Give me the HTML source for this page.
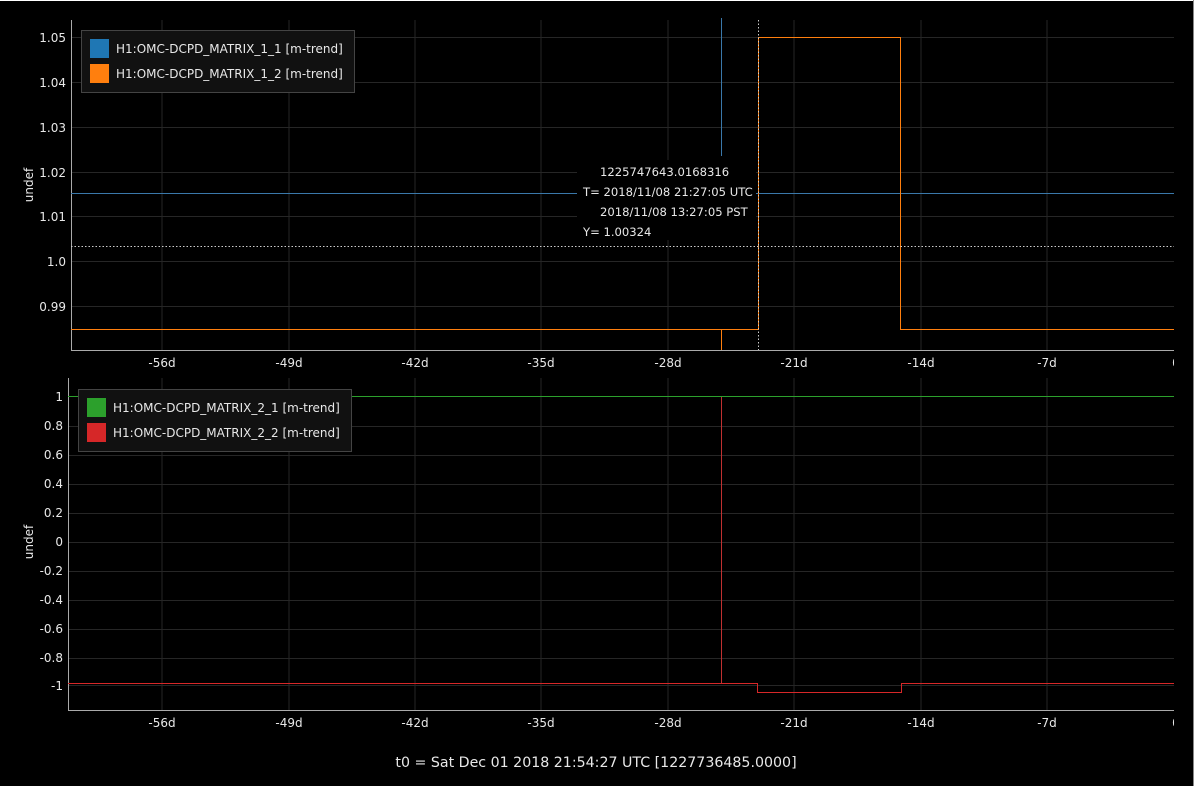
<!DOCTYPE html>
<html><head><style>
html,body{margin:0;padding:0;background:#000;width:1194px;height:786px;overflow:hidden}
svg{display:block}
text{font-family:"DejaVu Sans","Liberation Sans",sans-serif;fill:#e8e8e8}
</style></head><body>
<svg width="1194" height="786" viewBox="0 0 1194 786" xmlns="http://www.w3.org/2000/svg">
<rect width="1194" height="786" fill="#000"/>
<line x1="0" y1="0.5" x2="1194" y2="0.5" stroke="#fff" stroke-width="1"/>
<line x1="1193.5" y1="0" x2="1193.5" y2="786" stroke="#888" stroke-width="1"/>

<g stroke="#262626" stroke-width="1">
<line x1="162" y1="20" x2="162" y2="350"/><line x1="289" y1="20" x2="289" y2="350"/><line x1="415" y1="20" x2="415" y2="350"/><line x1="541" y1="20" x2="541" y2="350"/><line x1="668" y1="20" x2="668" y2="350"/><line x1="794" y1="20" x2="794" y2="350"/><line x1="921" y1="20" x2="921" y2="350"/><line x1="1047" y1="20" x2="1047" y2="350"/>
<line x1="71" y1="37.5" x2="1174" y2="37.5"/><line x1="71" y1="82.5" x2="1174" y2="82.5"/><line x1="71" y1="127.5" x2="1174" y2="127.5"/><line x1="71" y1="172.5" x2="1174" y2="172.5"/><line x1="71" y1="216.5" x2="1174" y2="216.5"/><line x1="71" y1="261.5" x2="1174" y2="261.5"/><line x1="71" y1="306.5" x2="1174" y2="306.5"/>
</g>
<line x1="71.5" y1="20" x2="71.5" y2="350" stroke="#aaa"/>
<line x1="71" y1="350.5" x2="1174" y2="350.5" stroke="#aaa"/>
<line x1="71" y1="193.5" x2="1174" y2="193.5" stroke="#3a78aa"/>
<line x1="721.5" y1="18" x2="721.5" y2="156" stroke="#3a78aa"/>
<polyline points="71,329.5 758.5,329.5 758.5,37.5 900.5,37.5 900.5,329.5 1174,329.5" fill="none" stroke="#ff7f0e" stroke-width="1"/>
<line x1="721.5" y1="329" x2="721.5" y2="350" stroke="#ff7f0e"/>
<line x1="758.5" y1="20" x2="758.5" y2="350" stroke="#ccc" stroke-dasharray="1.5,2"/>
<line x1="71" y1="246.5" x2="1174" y2="246.5" stroke="#ccc" stroke-dasharray="1.5,2"/>
<rect x="577" y="160" width="179" height="80" fill="#000"/>
<g font-size="11.6">
<text x="600" y="176">1225747643.0168316</text>
<text x="583" y="196">T= 2018/11/08 21:27:05 UTC</text>
<text x="600" y="216">2018/11/08 13:27:05 PST</text>
<text x="583" y="236">Y= 1.00324</text>
</g>
<g font-size="12" text-anchor="end">
<text x="66" y="42">1.05</text><text x="66" y="87">1.04</text><text x="66" y="132">1.03</text><text x="66" y="177">1.02</text><text x="66" y="221">1.01</text><text x="66" y="266">1.0</text><text x="66" y="311">0.99</text>
</g>
<g font-size="12" text-anchor="middle">
<text x="162" y="367">-56d</text><text x="289" y="367">-49d</text><text x="415" y="367">-42d</text><text x="541" y="367">-35d</text><text x="668" y="367">-28d</text><text x="794" y="367">-21d</text><text x="921" y="367">-14d</text><text x="1047" y="367">-7d</text><text x="1176" y="367">0</text>
</g>
<text x="33" y="185" font-size="12" text-anchor="middle" transform="rotate(-90 33 185)">undef</text>
<rect x="81.5" y="30.5" width="273" height="62" fill="#111" stroke="#444"/>
<rect x="90" y="39" width="19" height="19" fill="#1f77b4"/>
<rect x="90" y="64" width="19" height="19" fill="#ff7f0e"/>
<text x="116" y="53" font-size="12">H1:OMC-DCPD_MATRIX_1_1 [m-trend]</text>
<text x="116" y="78" font-size="12">H1:OMC-DCPD_MATRIX_1_2 [m-trend]</text>

<g stroke="#262626" stroke-width="1">
<line x1="162" y1="378" x2="162" y2="711"/><line x1="289" y1="378" x2="289" y2="711"/><line x1="415" y1="378" x2="415" y2="711"/><line x1="541" y1="378" x2="541" y2="711"/><line x1="668" y1="378" x2="668" y2="711"/><line x1="794" y1="378" x2="794" y2="711"/><line x1="921" y1="378" x2="921" y2="711"/><line x1="1047" y1="378" x2="1047" y2="711"/>
<line x1="68" y1="426.5" x2="1174" y2="426.5"/><line x1="68" y1="455.5" x2="1174" y2="455.5"/><line x1="68" y1="484.5" x2="1174" y2="484.5"/><line x1="68" y1="513.5" x2="1174" y2="513.5"/><line x1="68" y1="542.5" x2="1174" y2="542.5"/><line x1="68" y1="571.5" x2="1174" y2="571.5"/><line x1="68" y1="600.5" x2="1174" y2="600.5"/><line x1="68" y1="629.5" x2="1174" y2="629.5"/><line x1="68" y1="658.5" x2="1174" y2="658.5"/><line x1="68" y1="685.5" x2="1174" y2="685.5"/>
</g>
<line x1="68.5" y1="378" x2="68.5" y2="711" stroke="#aaa"/>
<line x1="68" y1="710.5" x2="1174" y2="710.5" stroke="#aaa"/>
<line x1="68" y1="396.5" x2="1174" y2="396.5" stroke="#2ca02c"/>
<line x1="721.5" y1="397" x2="721.5" y2="683" stroke="#c03030"/>
<polyline points="68,683.5 757.5,683.5 757.5,692.5 901.5,692.5 901.5,683.5 1174,683.5" fill="none" stroke="#d62728"/>
<g font-size="12" text-anchor="end">
<text x="63" y="401">1</text><text x="63" y="430">0.8</text><text x="63" y="459">0.6</text><text x="63" y="488">0.4</text><text x="63" y="517">0.2</text><text x="63" y="546">0</text><text x="63" y="575">-0.2</text><text x="63" y="604">-0.4</text><text x="63" y="633">-0.6</text><text x="63" y="662">-0.8</text><text x="63" y="690">-1</text>
</g>
<g font-size="12" text-anchor="middle">
<text x="162" y="727">-56d</text><text x="289" y="727">-49d</text><text x="415" y="727">-42d</text><text x="541" y="727">-35d</text><text x="668" y="727">-28d</text><text x="794" y="727">-21d</text><text x="921" y="727">-14d</text><text x="1047" y="727">-7d</text><text x="1176" y="727">0</text>
</g>
<rect x="1174" y="715" width="19" height="20" fill="#000"/>
<rect x="1174" y="355" width="19" height="20" fill="#000"/>
<text x="33" y="542" font-size="12" text-anchor="middle" transform="rotate(-90 33 542)">undef</text>
<rect x="78.5" y="389.5" width="273" height="62" fill="#111" stroke="#444"/>
<rect x="87" y="398" width="19" height="19" fill="#2ca02c"/>
<rect x="87" y="423" width="19" height="19" fill="#d62728"/>
<text x="113" y="412" font-size="12">H1:OMC-DCPD_MATRIX_2_1 [m-trend]</text>
<text x="113" y="437" font-size="12">H1:OMC-DCPD_MATRIX_2_2 [m-trend]</text>

<text x="596" y="767" font-size="14.2" text-anchor="middle">t0 = Sat Dec 01 2018 21:54:27 UTC [1227736485.0000]</text>
</svg>
</body></html>
